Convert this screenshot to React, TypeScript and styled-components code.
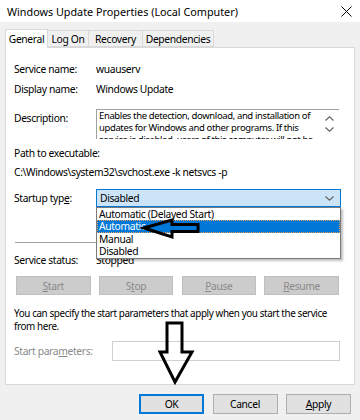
import React from "react";
import styled, { createGlobalStyle } from "styled-components";

const Global = createGlobalStyle`
  html, body { margin: 0; padding: 0; }
  body {
    width: 360px; height: 420px; overflow: hidden;
    background: #f0f0f0;
    font-family: "Noto Sans", "Open Sans", sans-serif;
    font-size: 10.3px; letter-spacing: -0.35px; color: #000;
  }
`;

const Window = styled.div`
  position: relative;
  width: 360px; height: 420px;
  display: flex; flex-direction: column;
`;

const TitleBar = styled.div`
  height: 22px; background: #fff;
  display: flex; align-items: center; justify-content: space-between;
  padding: 0 8px 0 7px;
  font-size: 10.8px; letter-spacing: 0;
`;

const Body = styled.div`
  padding: 8px 5px 0 5px;
  display: flex; flex-direction: column;
`;

const TabRow = styled.div`
  display: flex; align-items: flex-end; height: 17px;
  position: relative; z-index: 2;
`;

const Tab = styled.div<{ $active?: boolean; $w: number }>`
  box-sizing: border-box;
  width: ${(p) => p.$w}px;
  height: ${(p) => (p.$active ? "19px" : "17px")};
  margin-bottom: ${(p) => (p.$active ? "-1px" : "0")};
  display: flex; align-items: center; justify-content: center;
  background: ${(p) => (p.$active ? "#fff" : "#f0f0f0")};
  border: 1px solid #d9d9d9;
  border-bottom: ${(p) => (p.$active ? "none" : "1px solid #d9d9d9")};
  margin-left: ${(p) => (p.$active ? "0" : "-1px")};
`;

const Panel = styled.div`
  position: relative;
  box-sizing: border-box;
  height: 338px;
  background: #fff;
  border: 1px solid #d9d9d9;
  padding: 14px 12px 0 8px;
  display: flex; flex-direction: column;
`;

const Row = styled.div<{ $mt?: number; $align?: string }>`
  display: flex; align-items: ${(p) => p.$align || "center"};
  margin-top: ${(p) => p.$mt || 0}px;
  line-height: 15px;
  position: relative;
`;

const Label = styled.div<{ $w?: number; $dim?: boolean; $pt?: number }>`
  width: ${(p) => p.$w ?? 82}px; flex: none;
  padding-top: ${(p) => p.$pt || 0}px;
  color: ${(p) => (p.$dim ? "#8a8a8a" : "#000")};
`;

const Value = styled.div``;

const DescBox = styled.div`
  box-sizing: border-box;
  width: 243px; height: 30px; overflow: hidden;
  border-top: 1px solid #a0a0a0; border-left: 1px solid #a0a0a0;
  display: flex;
`;

const DescText = styled.div`
  flex: 1; padding: 0 0 0 2px;
  font-size: 9.5px; letter-spacing: -0.38px;
  line-height: 12px; white-space: nowrap; overflow: hidden;
`;

const ScrollCol = styled.div`
  width: 20px; flex: none;
  display: flex; flex-direction: column; align-items: center;
  padding-top: 6px; gap: 6px;
`;

const Combo = styled.div`
  position: relative;
  box-sizing: border-box;
  width: 245px; height: 18px;
  background: #cce4f7; border: 1px solid #0078d7;
  display: flex; align-items: center; justify-content: space-between;
  padding: 0 6px 0 3px;
`;

const DropList = styled.div`
  position: absolute; left: -1px; top: 17px;
  box-sizing: border-box;
  width: 245px;
  background: #fff; border: 1px solid #7a7a7a;
  box-shadow: 2px 2px 2px rgba(0,0,0,0.25);
  z-index: 5;
  display: flex; flex-direction: column;
  padding: 0 0 1px 0;
`;

const Item = styled.div<{ $sel?: boolean }>`
  height: 12.3px; line-height: 12px;
  padding-left: 2px;
  background: ${(p) => (p.$sel ? "#0078d7" : "transparent")};
  color: ${(p) => (p.$sel ? "#fff" : "#000")};
  outline: ${(p) => (p.$sel ? "1px dotted #e8a060" : "none")};
  outline-offset: -1px;
`;

const Separator = styled.div<{ $mt: number }>`
  height: 1px; background: #a0a0a0; margin-top: ${(p) => p.$mt}px;
  margin-left: 1px; width: 324px;
`;

const ButtonRow = styled.div<{ $mt?: number }>`
  display: flex; gap: 8.3px; margin-top: ${(p) => p.$mt || 0}px;
  padding-left: 2px;
`;

const DisabledButton = styled.div`
  box-sizing: border-box;
  width: 74.5px; height: 19px;
  background: #cccccc; border: 1px solid #bfbfbf;
  color: #8a8a8a;
  display: flex; align-items: center; justify-content: center;
`;

const Para = styled.div<{ $mt: number }>`
  margin-top: ${(p) => p.$mt}px; line-height: 12.5px;
  font-size: 9.9px; letter-spacing: -0.4px; white-space: nowrap;
`;

const Input = styled.div`
  box-sizing: border-box;
  width: 228px; height: 20px;
  border: 1px solid #d0d0d0; background: #fff;
`;

const Footer = styled.div`
  display: flex; justify-content: flex-end; gap: 8.5px;
  padding: 9px 4px 0 0;
`;

const DlgButton = styled.div<{ $default?: boolean }>`
  box-sizing: border-box;
  width: 65px; height: 20px;
  background: #e1e1e1;
  border: 1px solid ${(p) => (p.$default ? "#0078d7" : "#adadad")};
  box-shadow: ${(p) => (p.$default ? "inset 0 0 0 1px #0078d7" : "none")};
  display: flex; align-items: center; justify-content: center;
`;

const Overlay = styled.svg`
  position: absolute; left: 0; top: 0; pointer-events: none; z-index: 10;
`;

const Chevron = ({ up }: { up?: boolean }) => (
  <svg width="9" height="5" viewBox="0 0 9 5">
    <path d={up ? "M0.5 4.5 L4.5 0.8 L8.5 4.5" : "M0.5 0.5 L4.5 4.2 L8.5 0.5"} fill="none" stroke="#606060" strokeWidth="1.1" />
  </svg>
);

export default function App() {
  return (
    <>
      <Global />
      <Window>
        <TitleBar>
          <span>Windows Update Properties (Local Computer)</span>
          <svg width="11" height="11" viewBox="0 0 11 11">
            <path d="M0.5 0.5 L10.5 10.5 M10.5 0.5 L0.5 10.5" stroke="#000" strokeWidth="1" />
          </svg>
        </TitleBar>
        <Body>
          <TabRow>
            <Tab $active $w={43}>General</Tab>
            <Tab $w={42}>Log On</Tab>
            <Tab $w={55}>Recovery</Tab>
            <Tab $w={72}>Dependencies</Tab>
          </TabRow>
          <Panel>
            <Row>
              <Label>Service name:</Label>
              <Value>wuauserv</Value>
            </Row>
            <Row $mt={5}>
              <Label>Display name:</Label>
              <Value>Windows Update</Value>
            </Row>
            <Row $mt={12} $align="flex-start">
              <Label $pt={2}>Description:</Label>
              <DescBox>
                <DescText>
                  Enables the detection, download, and installation of
                  <br />
                  updates for Windows and other programs. If this
                  <br />
                  service is disabled, users of this computer will not be
                </DescText>
                <ScrollCol>
                  <Chevron up />
                  <Chevron />
                </ScrollCol>
              </DescBox>
            </Row>
            <Row $mt={7}>Path to executable:</Row>
            <Row $mt={4}>C:\Windows\system32\svchost.exe -k netsvcs -p</Row>
            <Row $mt={9}>
              <Label>Startup typ<u>e</u>:</Label>
              <Combo>
                <span>Disabled</span>
                <Chevron />
                <DropList>
                  <Item>Automatic (Delayed Start)</Item>
                  <Item $sel>Automatic</Item>
                  <Item>Manual</Item>
                  <Item>Disabled</Item>
                </DropList>
              </Combo>
            </Row>
            <Separator $mt={35} />
            <Row $mt={10}>
              <Label>Service status:</Label>
              <Value>Stopped</Value>
            </Row>
            <ButtonRow $mt={8}>
              <DisabledButton><span><u>S</u>tart</span></DisabledButton>
              <DisabledButton><span>S<u>t</u>op</span></DisabledButton>
              <DisabledButton><span><u>P</u>ause</span></DisabledButton>
              <DisabledButton><span><u>R</u>esume</span></DisabledButton>
            </ButtonRow>
            <Para $mt={12}>
              You can specify the start parameters that apply when you start the service
              <br />
              from here.
            </Para>
            <Row $mt={9}>
              <Label $w={98} $dim>Start para<u>m</u>eters:</Label>
              <Input />
            </Row>
          </Panel>
          <Footer>
            <DlgButton $default>OK</DlgButton>
            <DlgButton>Cancel</DlgButton>
            <DlgButton><span><u>A</u>pply</span></DlgButton>
          </Footer>
        </Body>
        <Overlay width="360" height="420" viewBox="0 0 360 420">
          <path d="M144 228 L172 220 L172 224.5 L198 224.5 L198 231.5 L172 231.5 L172 237 Z" fill="none" stroke="#000" strokeWidth="3" strokeLinejoin="miter" />
          <path d="M167 323 L182 323 L182 352 L192 352 L175 382 L160 352 L167 352 Z" fill="none" stroke="#000" strokeWidth="3" strokeLinejoin="miter" />
        </Overlay>
      </Window>
    </>
  );
}
